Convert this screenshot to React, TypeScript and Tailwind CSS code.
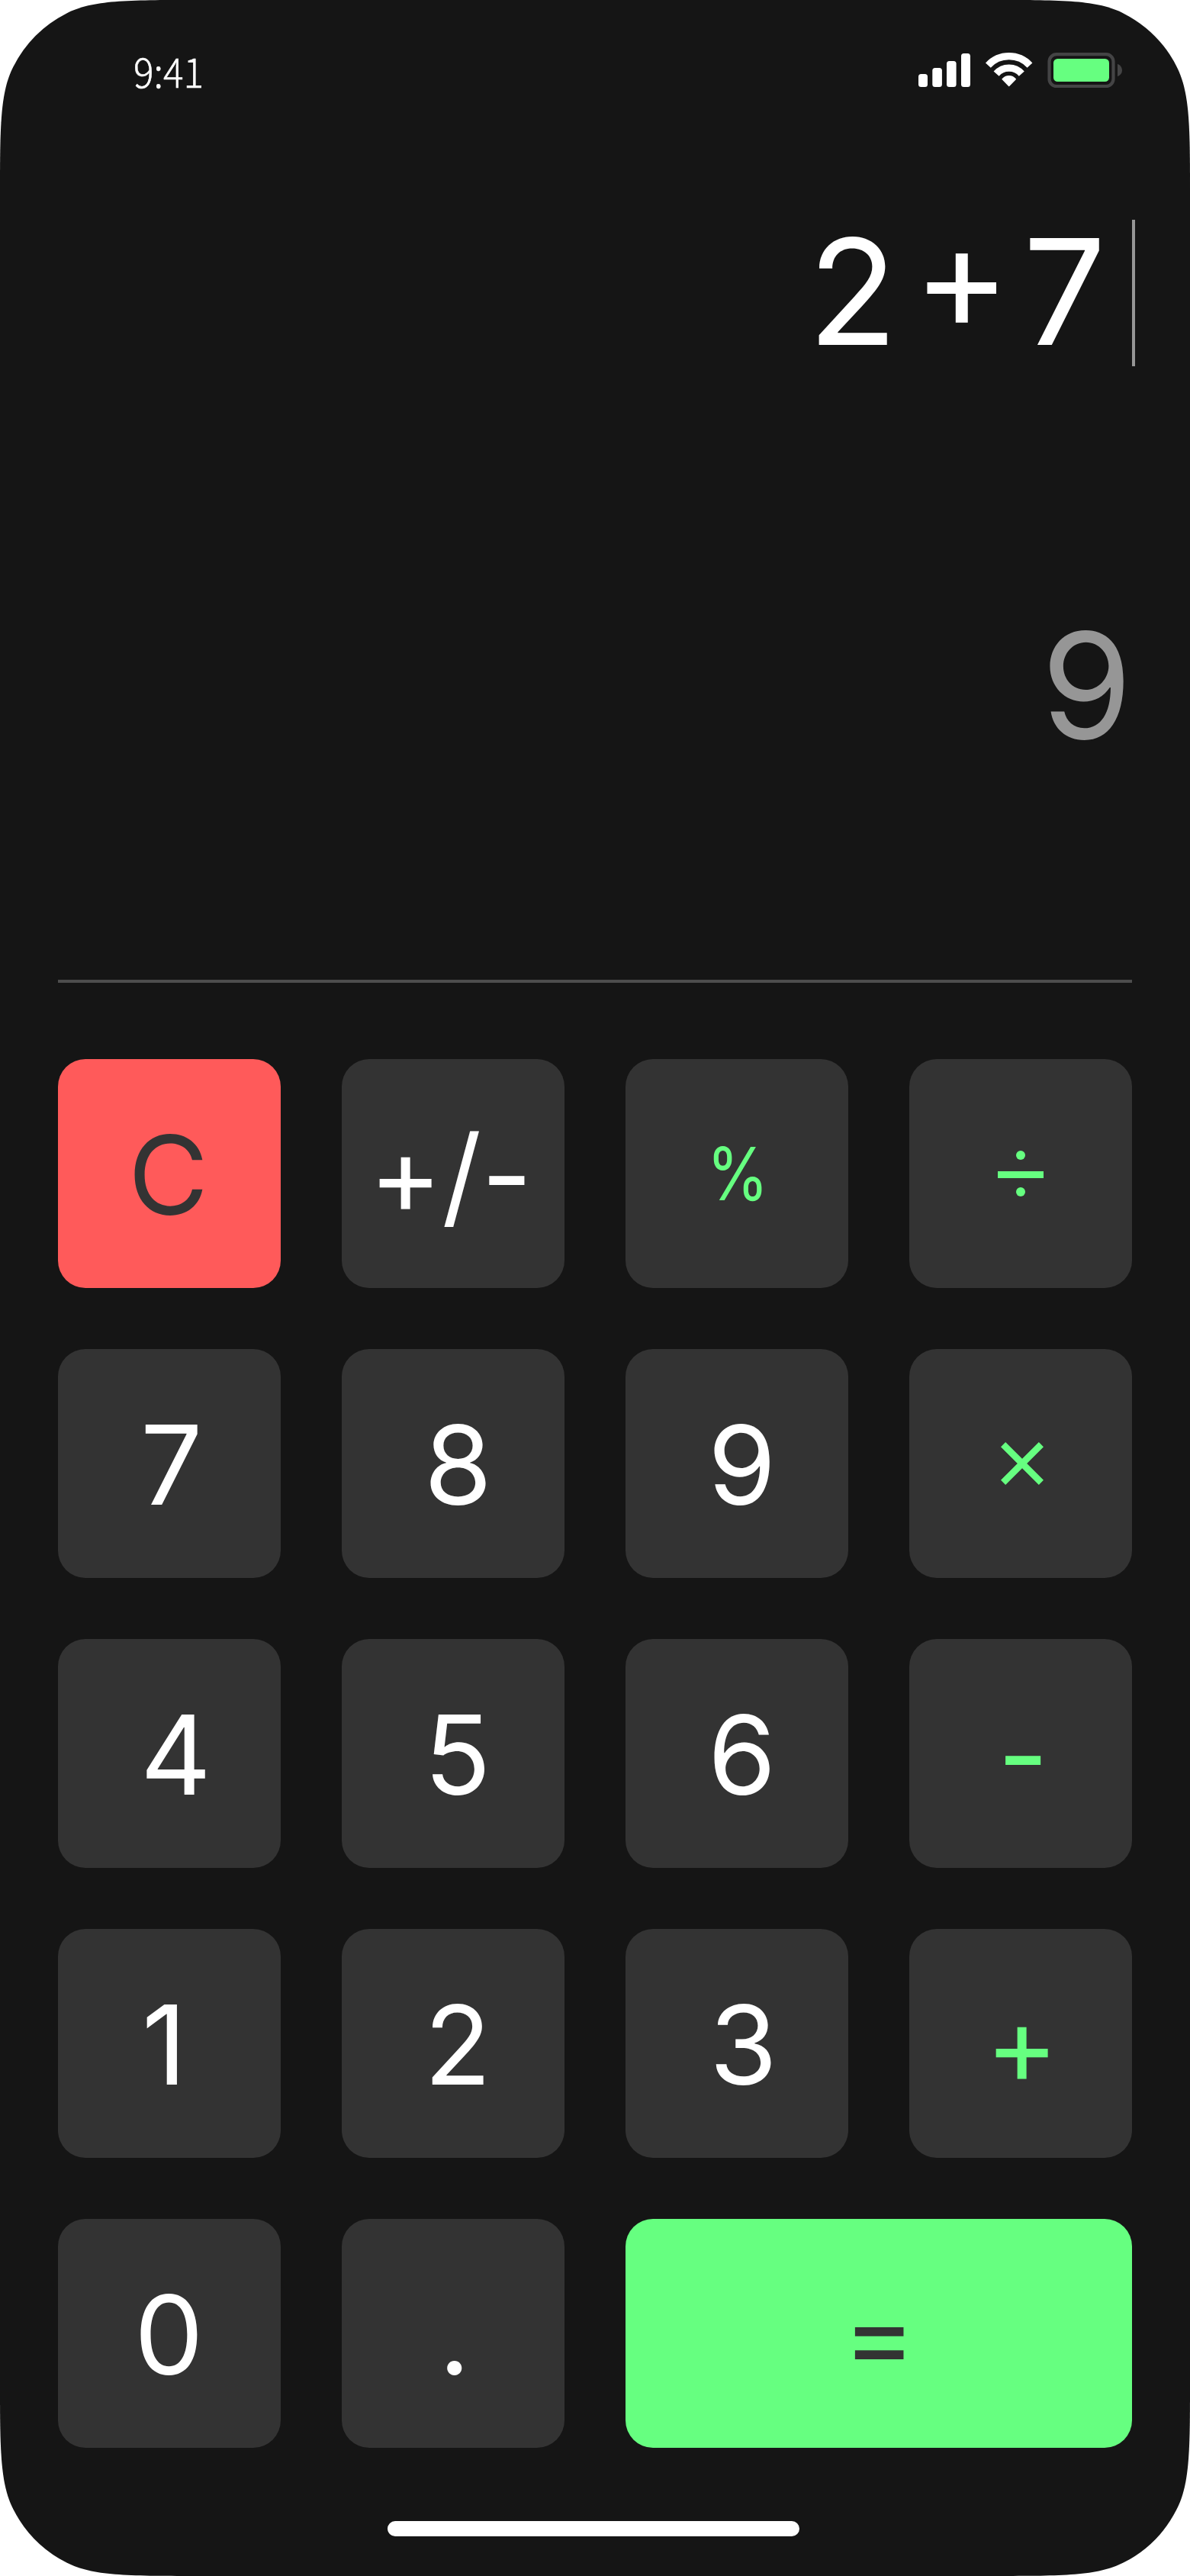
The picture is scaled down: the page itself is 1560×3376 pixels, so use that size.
import clsx from "clsx";
import type { ReactNode } from "react";

type Key = {
  name: string;
  label: ReactNode;
  className: string;
};

const digit = "bg-[#333333] text-white";
const operator = "bg-[#333333] text-[#66ff80]";

function DivideIcon() {
  return (
    <svg viewBox="0 0 60 60" className="h-[60px] w-[60px] self-center fill-current">
      <circle cx="30" cy="6" r="6" />
      <rect x="0" y="27" width="60" height="9" />
      <circle cx="30" cy="54" r="6" />
    </svg>
  );
}

function TimesIcon() {
  return (
    <svg viewBox="0 0 56 56" className="ml-1 h-14 w-14 self-center fill-none stroke-current" strokeWidth="8.7">
      <path d="M3.1 3.1 52.9 52.9M52.9 3.1 3.1 52.9" />
    </svg>
  );
}

const keys: Key[] = [
  { name: "clear", label: "C", className: "bg-[#ff5a5a] pl-[92px] text-[#333333]" },
  { name: "sign", label: "+/-", className: clsx(digit, "pl-9") },
  {
    name: "percent",
    label: <span className="inline-block scale-x-[0.86] text-[96px] leading-[300px]">%</span>,
    className: clsx(operator, "justify-center pl-0.5"),
  },
  { name: "divide", label: <DivideIcon />, className: clsx(operator, "justify-center") },
  { name: "7", label: "7", className: clsx(digit, "pl-[108px]") },
  { name: "8", label: "8", className: clsx(digit, "pl-[108px]") },
  { name: "9", label: "9", className: clsx(digit, "pl-[108px]") },
  { name: "multiply", label: <TimesIcon />, className: clsx(operator, "justify-center") },
  { name: "4", label: "4", className: clsx(digit, "pl-[108px]") },
  { name: "5", label: "5", className: clsx(digit, "pl-[108px]") },
  { name: "6", label: "6", className: clsx(digit, "pl-[108px]") },
  { name: "subtract", label: "-", className: clsx(operator, "pl-[116px]") },
  { name: "1", label: "1", className: clsx(digit, "pl-[110px]") },
  { name: "2", label: "2", className: clsx(digit, "pl-[108px]") },
  { name: "3", label: "3", className: clsx(digit, "pl-[110px]") },
  { name: "add", label: "+", className: clsx(operator, "pl-[100px]") },
  { name: "0", label: "0", className: clsx(digit, "pl-[100px]") },
  { name: "point", label: ".", className: clsx(digit, "pl-[127px]") },
  { name: "equals", label: "=", className: "col-span-2 bg-[#66ff80] pl-[285px] text-[#333333]" },
];

function StatusIcons() {
  return (
    <svg viewBox="1204 68 268 48" className="mt-1.5 h-12 w-[268px]">
      <g fill="#ffffff">
        <rect x="1204" y="97" width="12" height="17" rx="3.5" />
        <rect x="1222.3" y="89" width="12.6" height="25" rx="3.5" />
        <rect x="1241" y="80" width="12.6" height="34" rx="3.5" />
        <rect x="1260" y="70" width="12" height="44" rx="3.5" />
      </g>
      <g transform="translate(1322.7 111)" fill="none" stroke="#ffffff" strokeWidth="9.3">
        <path d="M-27.3-25.4A37.3 37.3 0 0 1 27.3-25.4" />
        <path d="M-16.6-14.4A22 22 0 0 1 16.6-14.4" />
        <path
          d="M-8.5-7.2A11.1 11.1 0 0 1 8.5-7.2L0 1.4Z"
          fill="#ffffff"
          strokeWidth="1.6"
          strokeLinejoin="round"
        />
      </g>
      <rect x="1375.5" y="71.2" width="84" height="41.8" rx="9.5" fill="none" stroke="#444445" strokeWidth="4.2" />
      <rect x="1381" y="77" width="73" height="30" rx="5.5" fill="#66ff80" />
      <path d="M1465 83.7Q1471 86.5 1471 92T1465 100.3Z" fill="#444445" />
    </svg>
  );
}

export default function App() {
  return (
    <main className="flex h-[3376px] w-[1560px] flex-col bg-[#151515] font-['Inter',sans-serif] text-white [clip-path:path('M256,0H1304C1393.6,0,1438.4,0,1472.6,17.4A160,160,0,0,1,1542.6,87.4C1560,121.6,1560,166.4,1560,256V3120C1560,3209.6,1560,3254.4,1542.6,3288.6A160,160,0,0,1,1472.6,3358.6C1438.4,3376,1393.6,3376,1304,3376H256C166.4,3376,121.6,3376,87.4,3358.6A160,160,0,0,1,17.4,3288.6C0,3254.4,0,3209.6,0,3120V256C0,166.4,0,121.6,17.4,87.4A160,160,0,0,1,87.4,17.4C121.6,0,166.4,0,256,0Z')]">
      <header className="flex h-72 items-start justify-between pt-[62px] pr-[88px] pl-[175px]">
        <span className="inline-block origin-left scale-x-[0.92] font-['Noto_Sans_CJK_SC',sans-serif] text-[54px] leading-[60px] font-light [-webkit-text-stroke:0.5px_white]">
          9:41
        </span>
        <StatusIcons />
      </header>

      <section className="flex h-48 justify-end pr-[72px] text-[192px] leading-[188px]">
        <span>2</span>
        <span className="ml-[21px] -translate-y-5">+</span>
        <span className="ml-[17px]">7</span>
        <span className="ml-[34px] h-48 w-1 bg-[#969696]" />
      </section>
      <output className="mt-[324px] block h-[188px] pr-[76px] text-right text-[192px] leading-[188px] text-[#969696]">
        9
      </output>

      <hr className="mx-[76px] mt-[292px] h-1 border-0 bg-[#4d4d4d]" />

      <section className="mx-[76px] mt-[100px] grid auto-rows-[300px] grid-cols-4 gap-20 text-[144px] leading-[303px]">
        {keys.map((key) => (
          <button
            key={key.name}
            aria-label={key.name}
            className={clsx("flex h-[300px] items-start overflow-hidden rounded-[36px] whitespace-nowrap", key.className)}
          >
            {key.label}
          </button>
        ))}
      </section>

      <div className="mt-24 h-5 w-[540px] -translate-x-0.5 self-center rounded-full bg-white" />
    </main>
  );
}
